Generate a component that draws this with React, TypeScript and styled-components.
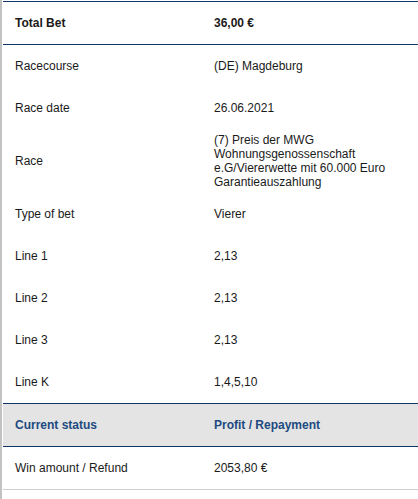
import React from 'react';
import styled, { createGlobalStyle } from 'styled-components';

const GlobalStyle = createGlobalStyle`
  html, body {
    margin: 0;
    padding: 0;
    background: #ffffff;
  }
  body {
    font-family: "Liberation Sans", Arial, sans-serif;
    font-size: 12px;
    color: #1a1a1a;
  }
`;

const Page = styled.div`
  min-height: 100vh;
  box-sizing: border-box;
  border-left: 2px solid #c2c2c2;
  padding: 1px 0 0 1px;
`;

const Table = styled.div`
  display: flex;
  flex-direction: column;
`;

const Row = styled.div<{ $variant?: 'head' | 'status' | 'last' }>`
  display: grid;
  grid-template-columns: 199px 1fr;
  align-items: center;
  min-height: 42px;
  box-sizing: content-box;
  line-height: 14px;
  background: ${({ $variant }) => ($variant === 'status' ? '#e4e4e4' : 'transparent')};
  color: ${({ $variant }) => ($variant === 'status' ? '#1d4a80' : '#1a1a1a')};
  font-weight: ${({ $variant }) => ($variant === 'head' || $variant === 'status' ? 700 : 400)};
  border-top: ${({ $variant }) => ($variant === 'head' || $variant === 'status' ? '1px solid #0f3868' : 'none')};
  border-bottom: ${({ $variant }) =>
    $variant === 'head' || $variant === 'status'
      ? '1px solid #0f3868'
      : $variant === 'last'
      ? '1px solid #cfcfcf'
      : 'none'};
`;

const Cell = styled.div`
  padding: 4px 12px;
`;

interface Item {
  label: string;
  value: string;
}

const details: Item[] = [
  { label: 'Racecourse', value: '(DE) Magdeburg' },
  { label: 'Race date', value: '26.06.2021' },
  {
    label: 'Race',
    value: '(7) Preis der MWG Wohnungsgenossenschaft e.G/Viererwette mit 60.000 Euro Garantieauszahlung',
  },
  { label: 'Type of bet', value: 'Vierer' },
  { label: 'Line 1', value: '2,13' },
  { label: 'Line 2', value: '2,13' },
  { label: 'Line 3', value: '2,13' },
  { label: 'Line K', value: '1,4,5,10' },
];

export default function App() {
  return (
    <>
      <GlobalStyle />
      <Page>
        <Table>
          <Row $variant="head">
            <Cell>Total Bet</Cell>
            <Cell>36,00 €</Cell>
          </Row>
          {details.map((d) => (
            <Row key={d.label}>
              <Cell>{d.label}</Cell>
              <Cell>{d.value}</Cell>
            </Row>
          ))}
          <Row $variant="status">
            <Cell>Current status</Cell>
            <Cell>Profit / Repayment</Cell>
          </Row>
          <Row $variant="last">
            <Cell>Win amount / Refund</Cell>
            <Cell>2053,80 €</Cell>
          </Row>
        </Table>
      </Page>
    </>
  );
}
